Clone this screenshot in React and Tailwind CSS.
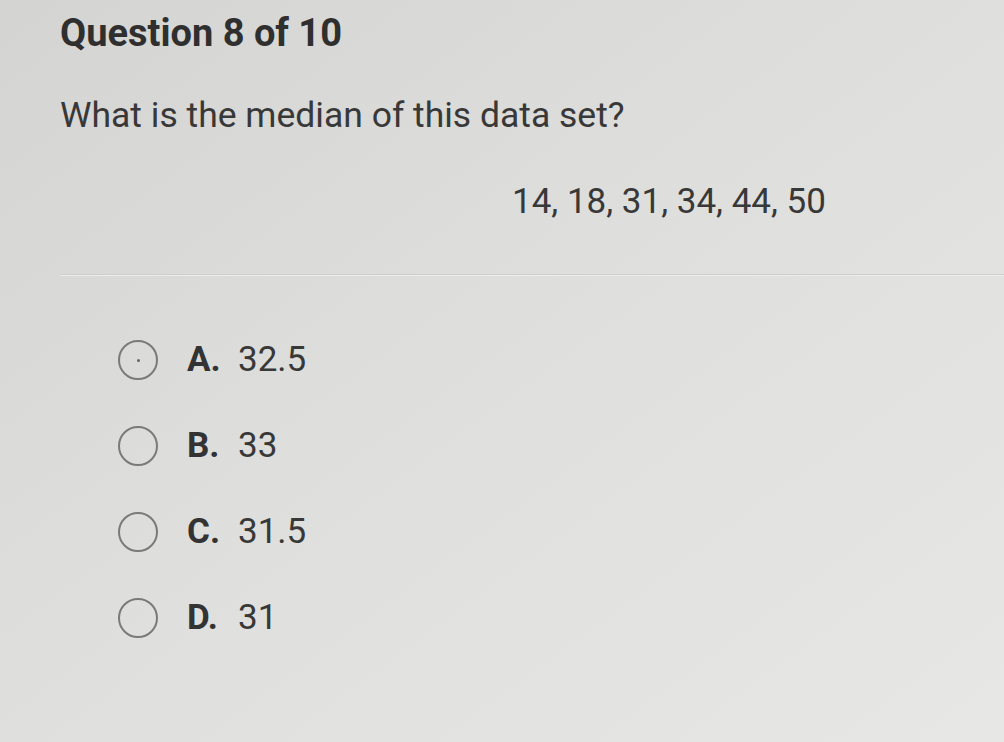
import React from 'react';

const OPTIONS = [
  { letter: 'A.', value: '32.5', focus: true },
  { letter: 'B.', value: '33' },
  { letter: 'C.', value: '31.5' },
  { letter: 'D.', value: '31' },
];

const Radio = ({ focus }) => (
  <div className="w-[40px] h-[40px] rounded-full border-[2px] border-[#7a7a7a] flex items-center justify-center shrink-0">
    {focus && <div className="w-[3px] h-[3px] rounded-full bg-[#666]" />}
  </div>
);

export default function App() {
  return (
    <div
      className="w-[1004px] h-[742px] overflow-hidden bg-gradient-to-br from-[#d4d4d2] via-[#dfdfdd] to-[#e7e7e5] text-[#383838]"
      style={{ fontFamily: 'Roboto, "Liberation Sans", sans-serif' }}
    >
      <div className="pl-[60px] pt-[13px]">
        <h1 className="text-[38px] font-bold leading-[40px] text-[#2f2f2f]">Question 8 of 10</h1>
        <p className="mt-[42px] text-[35.5px] leading-[40px]">What is the median of this data set?</p>
        <p className="mt-[47px] ml-[452px] text-[35px] leading-[40px]">14, 18, 31, 34, 44, 50</p>
      </div>

      <div className="mt-[52px] ml-[60px] h-[2px] bg-[#cfcfcd] border-b border-[#ececea]" />

      <div className="mt-[64px] pl-[118px] flex flex-col gap-[46px]">
        {OPTIONS.map((o) => (
          <div key={o.letter} className="flex items-center h-[40px]">
            <Radio focus={o.focus} />
            <span className="ml-[29px] w-[51px] text-[35px] font-bold text-[#333]">{o.letter}</span>
            <span className="text-[35px]">{o.value}</span>
          </div>
        ))}
      </div>
    </div>
  );
}
